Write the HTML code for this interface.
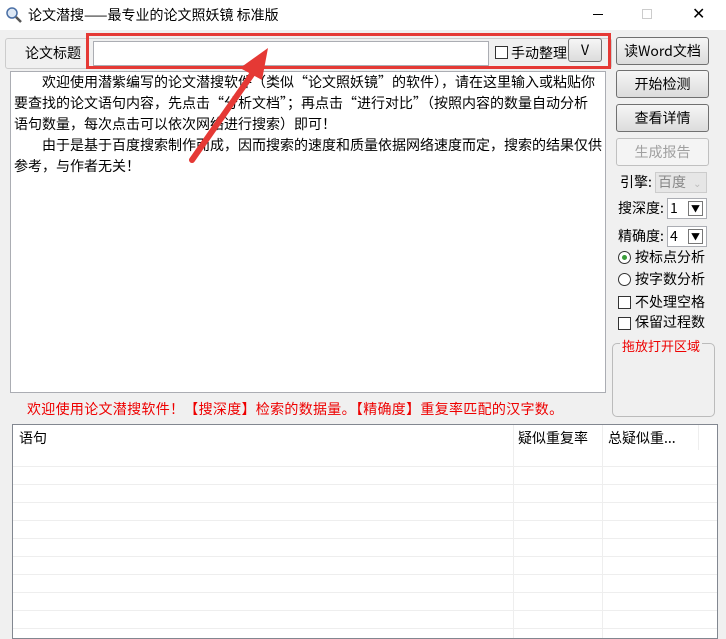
<!DOCTYPE html><html><head><meta charset="utf-8"><style>
*{box-sizing:border-box;margin:0;padding:0}
body{width:726px;height:639px;background:#f0f0f0;font-family:"Noto Sans CJK SC","WenQuanYi Zen Hei",sans-serif;font-size:14px;color:#000;position:relative;overflow:hidden}
.a{position:absolute;white-space:nowrap}
.btn{position:absolute;left:616px;width:93px;height:28px;border:1px solid #707070;border-radius:3px;background:linear-gradient(#f6f6f6,#dcdcdc);text-align:center;line-height:26px;font-size:14px}
.cb{position:absolute;width:13px;height:13px;border:1px solid #333;background:#fff}
.sel{position:absolute;border:1px solid #abadb3;background:#fff;height:21px;line-height:19px}
</style></head><body>
<div class="a" style="left:0;top:0;width:726px;height:30px;background:#fff"></div>
<svg class="a" style="left:5px;top:6px" width="18" height="18"><circle cx="7" cy="7" r="5" fill="#dde8f5" stroke="#4a6fa5" stroke-width="1.5"/><line x1="11" y1="11" x2="16" y2="16" stroke="#555" stroke-width="2.5"/></svg>
<div class="a" style="left:28px;top:5px;font-size:14px">论文潜搜——最专业的论文照妖镜 标准版</div>
<div class="a" style="left:593px;top:14px;width:10px;height:1px;background:#000"></div>
<div class="a" style="left:642px;top:9px;width:10px;height:10px;border:1px solid #ccc"></div>
<div class="a" style="left:692px;top:4px;font-size:16px;font-family:'DejaVu Sans',sans-serif">✕</div>
<div class="a" style="left:5px;top:38px;width:607px;height:31px;border:1px solid #ccc;border-radius:3px"></div>
<div class="a" style="left:25px;top:43px">论文标题</div>
<div class="a" style="left:93px;top:41px;width:396px;height:25px;border:1px solid #abadb3;background:#fff"></div>
<div class="cb" style="left:495px;top:46px"></div>
<div class="a" style="left:511px;top:43px">手动整理</div>
<div class="a" style="left:568px;top:38px;width:34px;height:24px;border:1px solid #707070;border-radius:3px;background:linear-gradient(#f6f6f6,#dcdcdc);text-align:center;line-height:22px">V</div>
<div class="a" style="left:86px;top:33px;width:525px;height:36px;border:3px solid #e53935"></div>
<div class="btn" style="top:37px">读Word文档</div>
<div class="btn" style="top:70px">开始检测</div>
<div class="btn" style="top:104px">查看详情</div>
<div class="btn" style="top:138px;color:#a0a0a0;border-color:#c0c0c0;background:#f4f4f4">生成报告</div>
<div class="a" style="left:10px;top:71px;width:596px;height:322px;border:1px solid #abadb3;background:#fff;padding:0 3px;line-height:21px;font-size:14px;overflow:hidden">　　欢迎使用潜紫编写的论文潜搜软件（类似“论文照妖镜”的软件），请在这里输入或粘贴你<br>要查找的论文语句内容，先点击“分析文档”；再点击“进行对比”（按照内容的数量自动分析<br>语句数量，每次点击可以依次网络进行搜索）即可！<br>　　由于是基于百度搜索制作而成，因而搜索的速度和质量依据网络速度而定，搜索的结果仅供<br>参考，与作者无关！</div>
<svg class="a" style="left:0;top:0" width="726" height="639"><line x1="192" y1="160" x2="255" y2="70" stroke="#e53935" stroke-width="6" stroke-linecap="round"/><polygon points="268,48 240,68 262,80" fill="#e53935"/></svg>
<div class="a" style="left:620px;top:172px">引擎:</div>
<div class="sel" style="left:655px;top:172px;width:52px;background:#e6e6e6;border-color:#ccc;color:#888;padding-left:2px">百度 <span style="font-size:10px;color:#bbb;margin-left:4px">⌄</span></div>
<div class="a" style="left:618px;top:198px">搜深度:</div>
<div class="sel" style="left:667px;top:198px;width:40px;padding-left:2px">1<span class="a" style="left:20px;top:2px;width:15px;height:15px;border:1px solid #777;font-size:9px;text-align:center;line-height:13px">▼</span></div>
<div class="a" style="left:618px;top:226px">精确度:</div>
<div class="sel" style="left:667px;top:226px;width:40px;padding-left:2px">4<span class="a" style="left:20px;top:2px;width:15px;height:15px;border:1px solid #777;font-size:9px;text-align:center;line-height:13px">▼</span></div>
<div class="a" style="left:618px;top:251px;width:13px;height:13px;border:1px solid #333;border-radius:50%;background:#fff"><div style="margin:3px;width:5px;height:5px;border-radius:50%;background:#3a9d3a"></div></div>
<div class="a" style="left:635px;top:247px">按标点分析</div>
<div class="a" style="left:618px;top:273px;width:13px;height:13px;border:1px solid #333;border-radius:50%;background:#fff"></div>
<div class="a" style="left:635px;top:269px">按字数分析</div>
<div class="cb" style="left:618px;top:296px"></div>
<div class="a" style="left:635px;top:292px">不处理空格</div>
<div class="cb" style="left:618px;top:317px"></div>
<div class="a" style="left:635px;top:312px">保留过程数</div>
<div class="a" style="left:612px;top:343px;width:103px;height:74px;border:1px solid #bbb;border-radius:5px"></div>
<div class="a" style="left:620px;top:336px;color:#e00;background:#f0f0f0;font-size:13px;padding:0 2px">拖放打开区域</div>
<div class="a" style="left:27px;top:399px;color:#e00;font-size:14px;letter-spacing:0.3px">欢迎使用论文潜搜软件！【搜深度】检索的数据量。【精确度】重复率匹配的汉字数。</div>
<div class="a" style="left:12px;top:424px;width:706px;height:215px;border:1px solid #828790;background:#fff;overflow:hidden">
<div class="a" style="left:6px;top:3px">语句</div>
<div class="a" style="left:505px;top:3px">疑似重复率</div>
<div class="a" style="left:595px;top:3px">总疑似重...</div>
<div class="a" style="left:500px;top:0;width:1px;height:215px;background:#eee"></div>
<div class="a" style="left:589px;top:0;width:1px;height:215px;background:#eee"></div>
<div class="a" style="left:685px;top:0;width:1px;height:25px;background:#eee"></div>
<div class="a" style="left:0;top:41px;width:706px;height:1px;background:#eee"></div>
<div class="a" style="left:0;top:59px;width:706px;height:1px;background:#eee"></div>
<div class="a" style="left:0;top:77px;width:706px;height:1px;background:#eee"></div>
<div class="a" style="left:0;top:95px;width:706px;height:1px;background:#eee"></div>
<div class="a" style="left:0;top:113px;width:706px;height:1px;background:#eee"></div>
<div class="a" style="left:0;top:131px;width:706px;height:1px;background:#eee"></div>
<div class="a" style="left:0;top:149px;width:706px;height:1px;background:#eee"></div>
<div class="a" style="left:0;top:167px;width:706px;height:1px;background:#eee"></div>
<div class="a" style="left:0;top:185px;width:706px;height:1px;background:#eee"></div>
<div class="a" style="left:0;top:203px;width:706px;height:1px;background:#eee"></div>
</div>
</body></html>
